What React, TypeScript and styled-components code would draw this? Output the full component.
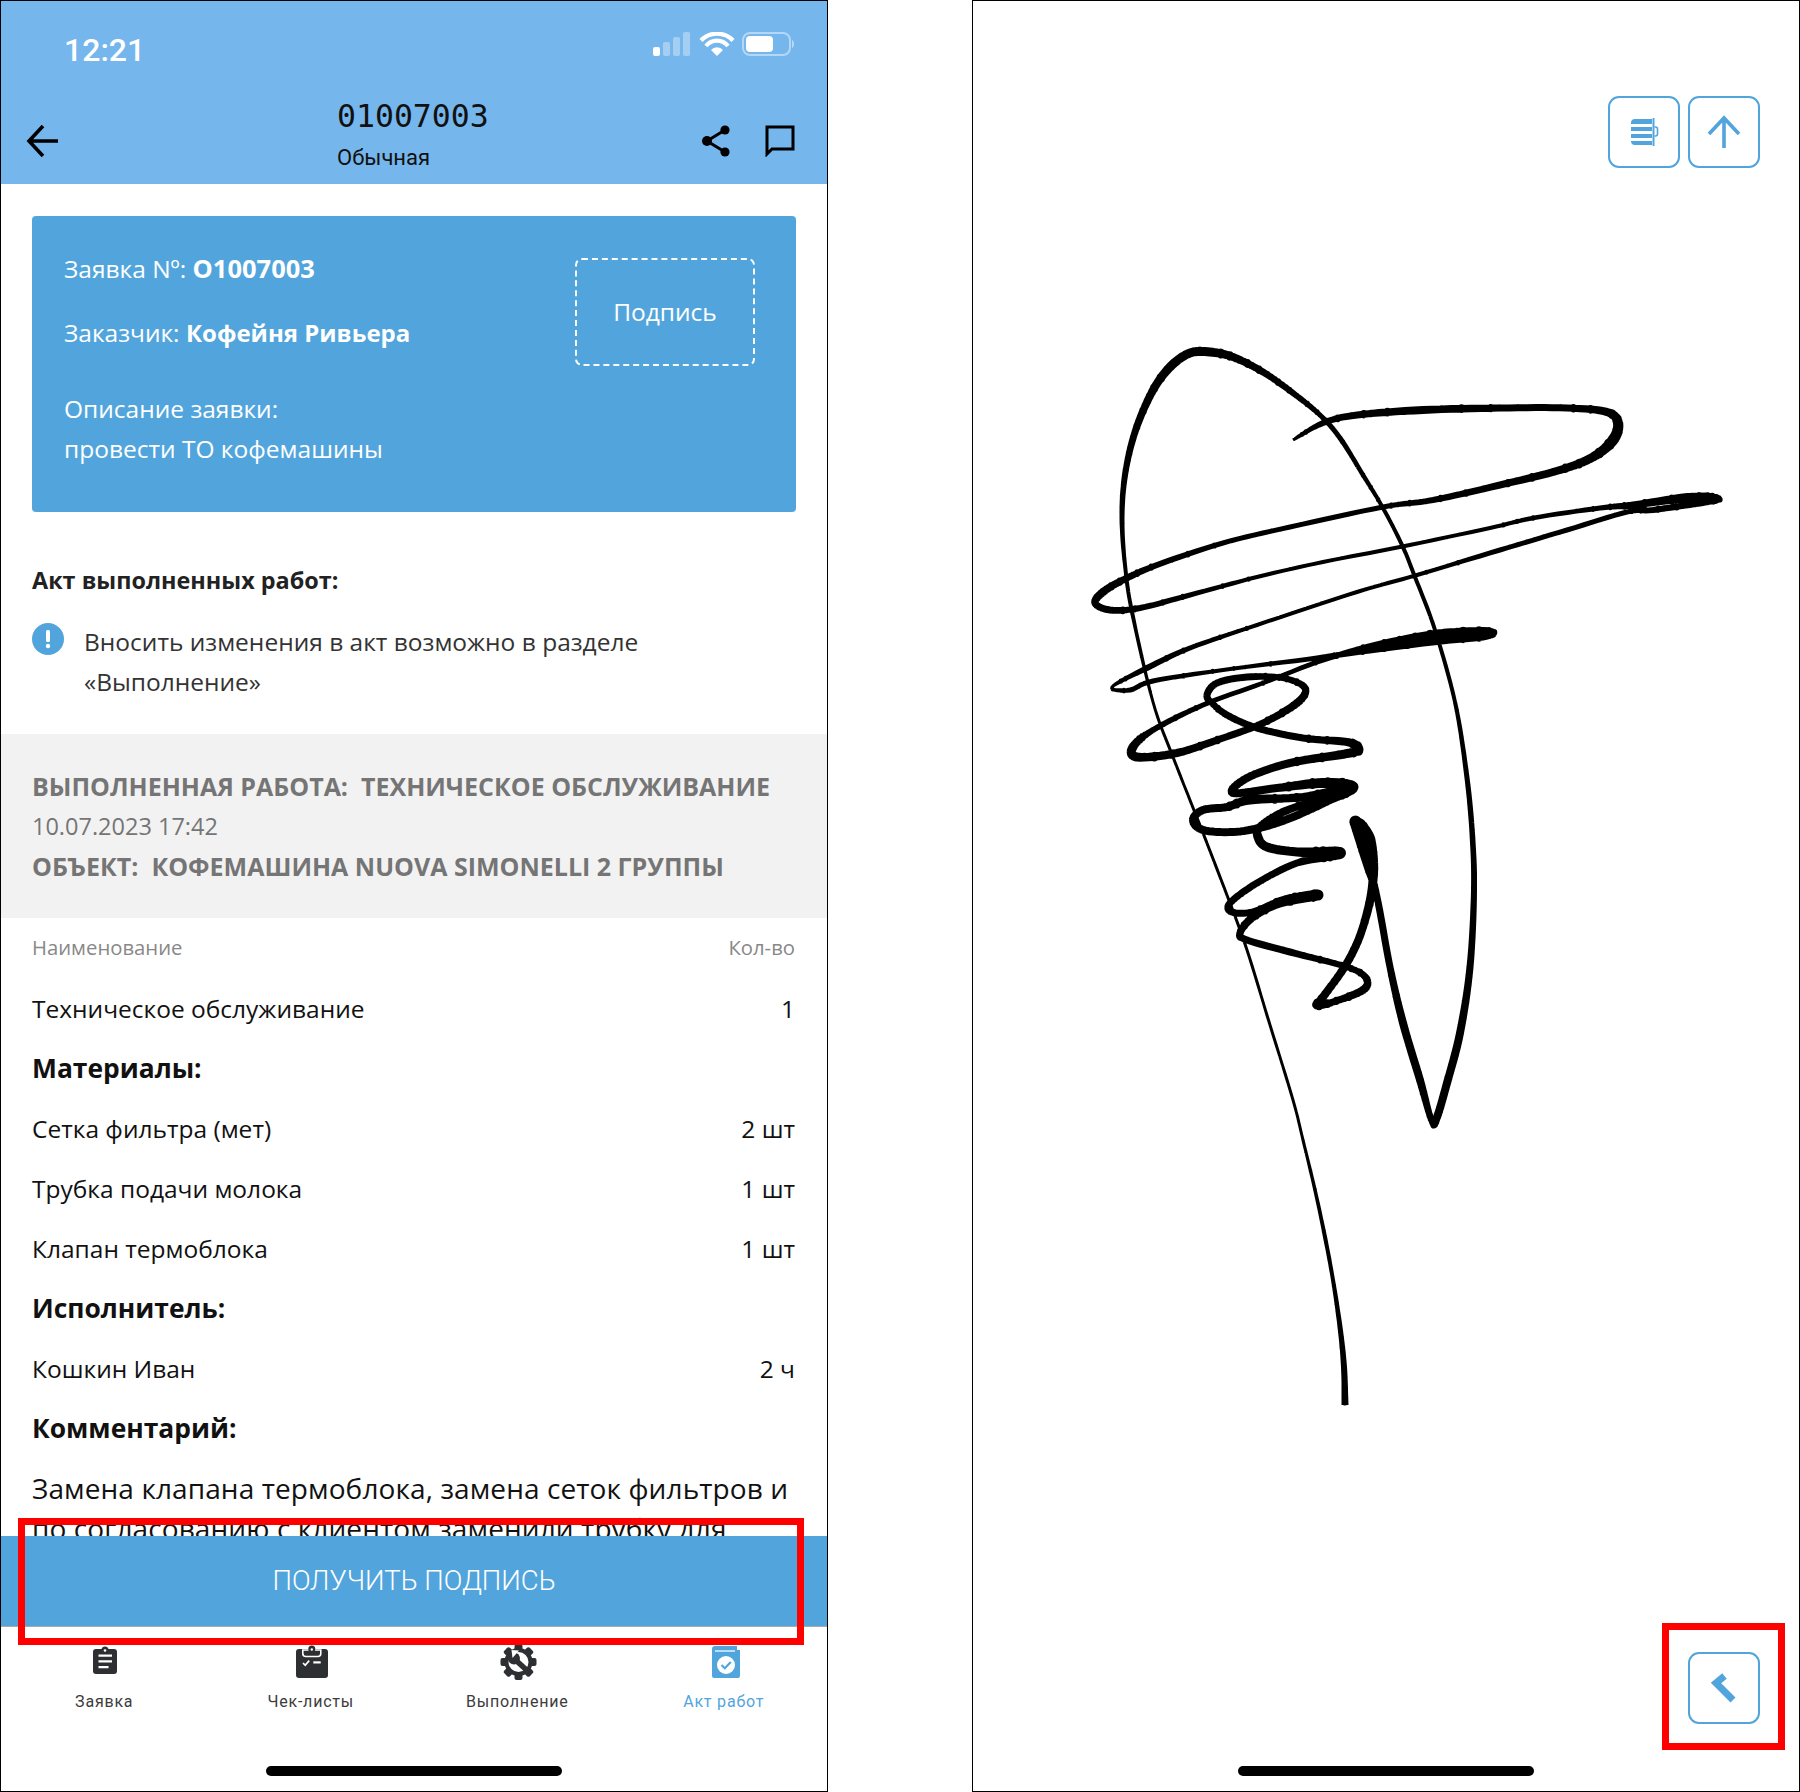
import React from "react";
import styled, { createGlobalStyle } from "styled-components";

const BLUE = "#52a5dc";
const DARK = "#2e2f33";
const BODY = `"Open Sans", "Liberation Sans", sans-serif`;
const UI = `Roboto, "Liberation Sans", sans-serif`;

const Global = createGlobalStyle`
  html, body { margin: 0; padding: 0; background: #fff; }
  * { box-sizing: border-box; }
`;

const Page = styled.div`
  width: 1800px; height: 1792px; display: flex; justify-content: space-between; background: #fff; font-family: ${BODY};
`;
const Phone = styled.section`
  position: relative; width: 828px; height: 1792px; border: 1px solid #000; display: flex; flex-direction: column; background: #fff; overflow: hidden;
`;
const Top = styled.header`
  height: 183px; flex: none; background: #75b6ec; display: flex; flex-direction: column;
`;
const StatusBar = styled.div`
  height: 86px; padding: 31px 32px 0 63px; display: flex; justify-content: space-between; align-items: flex-start;
`;
const Clock = styled.span`
  color: #fff; font: 500 32px/36px ${UI};
`;
const NavBar = styled.div`
  flex: 1; display: flex; padding: 0 32px 0 25px; justify-content: space-between; align-items: flex-start;
`;
const NavBack = styled.div`
  width: 311px; padding-top: 37px; flex: none;
`;
const TitleBox = styled.div`
  flex: 1; padding-top: 11px; display: flex; flex-direction: column;
`;
const Title = styled.div`
  font: 400 31.500px/36px "DejaVu Sans Mono", monospace; color: #111;
`;
const Subtitle = styled.div`
  margin-top: 11px; font: 400 22px/26px ${UI}; color: #111;
`;
const NavActions = styled.div`
  display: flex; gap: 34px; padding-top: 38px;
`;
const Content = styled.div`
  flex: 1; min-height: 0; overflow: hidden; padding-top: 32px;
`;
const Card = styled.div`
  margin: 0 31px; height: 296px; border-radius: 4px; background: ${BLUE}; color: #fff; padding: 32px 41px 0 32px; display: flex; justify-content: space-between;
`;
const CardInfo = styled.div`
  font-size: 24.500px; line-height: 40px;
`;
const CardLine = styled.div<{ $gap?: number }>`
  margin-bottom: ${p => p.$gap ?? 0}px;
  b { font-weight: 700; font-size: 24px; }
`;
const CardNumber = styled.b`
  && { font-size: 25.500px; }
`;
const SignBox = styled.div`
  width: 180px; height: 108px; margin-top: 10px; border: 2px dashed #fff; border-radius: 7px; display: flex; align-items: center; justify-content: center; font-size: 24.500px; padding-bottom: 2px;
`;
const Section = styled.h2`
  margin: 48px 0 0 31px; font: 700 23.400px/40px ${BODY}; color: #222;
`;
const Notice = styled.div`
  margin: 22px 31px 0 31px; display: flex; align-items: flex-start; gap: 20px; font-size: 24.500px; line-height: 40px; color: #333;
`;
const NoticeIcon = styled.svg`
  flex: none; width: 32px; height: 32px; margin-top: 1px;
`;
const Summary = styled.div`
  margin-top: 32px; height: 184px; background: #f2f2f2; padding: 32px 24px 0 31px; color: #757575; font-size: 25px; line-height: 40px;
  b { font-weight: 700; }
`;
const SummaryDate = styled.div`
  font-size: 23.500px;
`;
const THead = styled.div`
  display: flex; justify-content: space-between; margin: 9px 32px 0 31px; height: 40px; align-items: center; font-size: 20.300px; color: #888;
`;
const Row = styled.div<{ $bold?: boolean }>`
  display: flex; justify-content: space-between; align-items: center; height: 60px; margin: 0 32px 0 31px;
  font-size: ${p => (p.$bold ? 26.4 : 24.5)}px; font-weight: ${p => (p.$bold ? 700 : 400)}; color: #111;
`;
const Table = styled.div`
  padding-top: 11px;
`;
const Comment = styled.div`
  margin: 0 31px; font-size: 28px; line-height: 40px; padding-top: 10px; color: #111; letter-spacing: .1px;
`;
const GetSign = styled.div`
  flex: none; height: 91px; border-bottom: 1px solid #aaa; background: ${BLUE}; color: #fff; display: flex; align-items: center; justify-content: center; font: 300 27.500px/1 ${UI};
`;
const Tabs = styled.nav`
  flex: none; height: 164px; display: grid; grid-template-columns: repeat(4, 1fr); align-content: start; padding-top: 17px;
`;
const Tab = styled.div<{ $active?: boolean }>`
  display: flex; flex-direction: column; align-items: center; height: 68px; justify-content: space-between;
  color: ${p => (p.$active ? BLUE : "#3c3c3c")}; font: 400 16px/20px ${UI}; letter-spacing: .8px;
`;
const TabIcon = styled.svg`
  width: 40px; height: 38px;
`;
const HomeBar = styled.div`
  position: absolute; left: 50%; bottom: 15px; width: 296px; height: 10px; border-radius: 5px; background: #000; transform: translateX(-50%);
`;
const Marker = styled.div<{ $l: number; $t: number; $w: number; $h: number }>`
  position: absolute; left: ${p => p.$l}px; top: ${p => p.$t}px; width: ${p => p.$w}px; height: ${p => p.$h}px; border: 7px solid #f00; z-index: 5;
`;
const Canvas = styled.svg`
  position: absolute; inset: 0; width: 100%; height: 100%;
`;
const CanvasBody = styled.div`
  position: relative; flex: 1; display: flex; flex-direction: column; justify-content: space-between; padding: 95px 39px 67px 0; align-items: flex-end;
`;
const Tools = styled.div`
  position: relative; display: flex; gap: 8px;
`;
const ToolButton = styled.div`
  position: relative; width: 72px; height: 72px; border: 2px solid ${BLUE}; border-radius: 11px; display: flex; align-items: center; justify-content: center; background: #fff;
`;

// centre line of the signature: x, y, stroke width
const P: [number, number, number][] = [
  [1345,1405,7],[1344,1367,6],[1340,1327,5],[1333,1280,4],[1325,1237,4],[1315,1190,3.5],[1303,1140,3],[1293,1100,3],[1270,1025,3],[1247,950,3],[1230,903,3],[1203,833,3],[1173,757,3],[1153,702,3],[1132,612,4],[1125,565,4],[1122,518,5],[1125,475,6],[1135,432,7],[1152,392,8],[1170,367,9],[1190,353,9],[1210,352,9],[1233,357,8],[1263,372,7],[1293,393,6],[1320,415,5],[1340,438,5],[1363,475,4.5],[1383,508,4],[1402,545,4],[1415,577,4],[1435,630,4],[1455,702,4],[1466,770,5],[1472,830,5.5],[1474,890,6],[1470,967,7],[1460,1033,8],[1447,1083,8],[1437,1117,8],[1432,1122,6],[1420,1080,8],[1403,1023,8],[1390,967,7],[1377,897,7],[1367,863,9],[1358,830,12],[1356,822,12],[1368,840,15],[1373,880,9],[1363,927,8],[1347,963,8],[1323,997,8],[1317,1005,9],[1333,1002,7],[1363,990,8],[1366,978,7],[1347,967,6],[1290,952,7],[1247,940,7],[1240,933,7],[1253,917,8],[1280,903,9],[1318,895,11],[1285,900,9],[1253,912,7],[1232,912,7],[1230,903,7],[1257,883,7],[1297,863,7],[1340,853,12],[1297,852,9],[1267,847,9],[1258,837,9],[1260,827,8],[1283,812,8],[1317,800,7],[1353,787,10],[1303,797,8],[1250,800,9],[1227,807,8],[1203,810,8],[1193,820,8],[1203,830,8],[1233,832,8],[1263,827,8],[1293,817,8],[1330,800,8],[1353,787,11],[1323,783,10],[1277,788,8],[1233,793,8],[1247,778,8],[1290,763,8],[1350,753,9],[1358,748,10],[1347,742,8],[1303,738,7],[1257,728,7],[1227,715,7],[1212,703,6],[1207,695,7],[1217,683,7],[1247,677,7],[1283,678,6],[1305,688,7],[1297,703,8],[1263,723,7],[1223,738,7],[1177,753,8],[1137,757,9],[1133,747,9],[1153,730,6],[1203,705,5],[1263,683,4.5],[1323,660,5],[1377,645,7],[1437,635,11],[1483,632,10],[1495,633,4],[1483,637,7],[1437,641,8],[1377,649,7],[1317,658,5],[1223,670,4],[1153,681,5],[1130,690,5],[1112,687,3],[1147,668,6],[1190,648,5],[1257,625,4],[1357,592,4],[1417,575,4],[1500,550,5],[1567,530,5],[1627,512,5],[1653,510,6],[1700,503,7],[1720,500,4],[1710,497,8],[1683,498,9],[1633,505,7],[1600,508,5],[1533,518,4.5],[1490,528,4],[1400,547,4],[1323,562,4],[1257,577,4],[1190,595,5],[1140,608,6],[1110,610,7],[1095,603,7],[1103,592,8],[1123,580,7],[1157,565,6],[1223,543,5],[1290,527,5],[1383,507,5],[1433,500,6],[1500,485,7],[1560,470,8],[1593,457,9],[1613,440,11],[1618,423,10],[1607,412,8],[1567,408,7],[1500,408,7],[1423,410,8],[1357,415,7],[1323,423,6],[1293,440,3],
];

function ribbon(points: [number, number, number][]): string {
  const s: [number, number, number][] = [];
  const at = (i: number) => points[Math.max(0, Math.min(points.length - 1, i))];
  for (let i = 0; i < points.length - 1; i++) {
    const [a, b, c, d] = [at(i - 1), at(i), at(i + 1), at(i + 2)];
    for (let k = 0; k < 8; k++) {
      const t = k / 8, t2 = t * t, t3 = t2 * t;
      const f = (j: number) => 0.5 * (2 * b[j] + (c[j] - a[j]) * t + (2 * a[j] - 5 * b[j] + 4 * c[j] - d[j]) * t2 + (3 * b[j] - a[j] - 3 * c[j] + d[j]) * t3);
      s.push([f(0), f(1), b[2] + (c[2] - b[2]) * t]);
    }
  }
  s.push(points[points.length - 1]);
  // a quad per step and a dot per joint, all with one winding, so crossings stay filled
  let out = "";
  for (let i = 0; i < s.length - 1; i++) {
    const [x0, y0, w0] = s[i], [x1, y1, w1] = s[i + 1];
    const dx = x1 - x0, dy = y1 - y0, l = Math.hypot(dx, dy) || 1;
    const nx = -dy / l, ny = dx / l;
    const q = (x: number, y: number, w: number, sg: number) => `${(x + sg * nx * w / 2).toFixed(1)} ${(y + sg * ny * w / 2).toFixed(1)}`;
    out += `M${q(x0, y0, w0, 1)}L${q(x1, y1, w1, 1)}L${q(x1, y1, w1, -1)}L${q(x0, y0, w0, -1)}Z`;
    if (i > 0) {
      const r = w0 / 2;
      out += `M${(x0 - r).toFixed(1)} ${y0.toFixed(1)}a${r.toFixed(1)} ${r.toFixed(1)} 0 1 0 ${(2 * r).toFixed(1)} 0a${r.toFixed(1)} ${r.toFixed(1)} 0 1 0 ${(-2 * r).toFixed(1)} 0Z`;
    }
  }
  return out;
}

const Signature = () => (
  <Canvas viewBox="973 1 826 1790">
    <path d={ribbon(P)} fill="#000" fillRule="nonzero" />
  </Canvas>
);

const StatusIcons = () => (
  <svg width="142" height="24" viewBox="0 0 142 24">
    <rect x="0" y="15" width="7" height="9" rx="2" fill="#fff" />
    <rect x="10" y="10" width="7" height="14" rx="2" fill="#fff" opacity=".35" />
    <rect x="20" y="5" width="7" height="19" rx="2" fill="#fff" opacity=".35" />
    <rect x="30" y="0" width="7" height="24" rx="2" fill="#fff" opacity=".35" />
    <path d="M48 8.500a22 22 0 0 1 32 0M53 14a14 14 0 0 1 22 0" fill="none" stroke="#fff" strokeWidth="4.200" />
    <path d="M58 18a8 8 0 0 1 12 0l-6 6z" fill="#fff" />
    <rect x="90" y="1" width="47" height="22" rx="7" fill="none" stroke="#fff" strokeOpacity=".45" strokeWidth="2" />
    <rect x="93" y="4" width="27" height="16" rx="4" fill="#fff" />
    <path d="M139 8c2.500 .5 2.500 7 0 8z" fill="#fff" opacity=".5" />
  </svg>
);

const Tab1 = () => (
  <TabIcon viewBox="0 0 40 38">
    <g transform="translate(9 3)">
      <rect x="0" y="2" width="24" height="25" rx="3" fill={DARK} />
      <circle cx="12" cy="3" r="3.500" fill={DARK} />
      <circle cx="12" cy="3.500" r="1.300" fill="#fff" />
      <path d="M5.500 7.500H19v2.200H5.500zM5.500 13.300H19v2.200H5.500zM5.500 19H15.500v2.200H5.500z" fill="#fff" />
    </g>
  </TabIcon>
);
const Tab2 = () => (
  <TabIcon viewBox="0 0 40 38">
    <g transform="translate(5 2)">
      <rect x="0" y="3" width="32" height="29" rx="3" fill={DARK} />
      <path d="M6.800 4h18v3.500a3 3 0 0 1-3 3h-12a3 3 0 0 1-3-3z" fill={DARK} stroke="#fff" strokeWidth="1.600" />
      <circle cx="15.800" cy="3" r="3.500" fill={DARK} />
      <circle cx="15.800" cy="3.500" r="1.200" fill="#fff" />
      <rect x="6.800" y="1" width="6" height="2" fill="#fff" opacity="0" />
      <path d="M7 17l2.200 2.200 4-4.600" fill="none" stroke="#fff" strokeWidth="1.700" />
      <rect x="17.300" y="15.300" width="7.400" height="2.200" fill="#fff" />
    </g>
  </TabIcon>
);
const Gear = () => (
  <TabIcon viewBox="0 0 40 38">
    <g transform="translate(3.500 0)">
      <g fill={DARK}>
        {[0, 45, 90, 135].map(a => (
          <rect key={a} x="14" y="0" width="8" height="36" rx="2" transform={`rotate(${a} 18 18)`} />
        ))}
      </g>
      <circle cx="18" cy="18" r="14" fill={DARK} />
      <circle cx="18" cy="18" r="10" fill="#fff" />
      <path d="M14 15L26 26" stroke={DARK} strokeWidth="5.500" />
      <circle cx="13.500" cy="14.500" r="6" fill={DARK} />
      <path d="M12 14L18.500 6.500 11 6z" fill="#fff" />
    </g>
  </TabIcon>
);
const Act = () => (
  <TabIcon viewBox="0 0 40 38">
    <g transform="translate(8 2)">
      <path d="M0 3a3 3 0 0 1 3-3h22v4h3v26a2 2 0 0 1-2 2H2a2 2 0 0 1-2-2z" fill={BLUE} />
      <path d="M3 5h20" stroke="#fff" strokeOpacity=".8" strokeWidth="1.600" />
      <circle cx="14" cy="19" r="9" fill="#fff" />
      <path d="M9.500 19l3.300 3.300 6-6.300" fill="none" stroke={BLUE} strokeWidth="2.200" />
    </g>
  </TabIcon>
);

export default function App() {
  return (
    <Page>
      <Global />
      <Phone>
        <Top>
          <StatusBar>
            <Clock>12:21</Clock>
            <StatusIcons />
          </StatusBar>
          <NavBar>
            <NavBack>
              <svg width="34" height="34" viewBox="0 0 34 34">
                <path d="M32 17H3M17 2L3 17l14 15" fill="none" stroke="#000" strokeWidth="3.600" />
              </svg>
            </NavBack>
            <TitleBox>
              <Title>01007003</Title>
              <Subtitle>Обычная</Subtitle>
            </TitleBox>
            <NavActions>
              <svg width="30" height="32" viewBox="0 0 30 32">
                <path d="M24 5L6 16l18 11" fill="none" stroke="#000" strokeWidth="3" />
                <circle cx="24" cy="5" r="4.600" /><circle cx="6" cy="16" r="5" /><circle cx="24" cy="27" r="4.600" />
              </svg>
              <svg width="30" height="32" viewBox="0 0 30 32">
                <path d="M2 2h26v22H7l-5 5z" fill="none" stroke="#000" strokeWidth="3" />
              </svg>
            </NavActions>
          </NavBar>
        </Top>
        <Content>
          <Card>
            <CardInfo>
              <CardLine $gap={24}>Заявка Nº: <CardNumber>O1007003</CardNumber></CardLine>
              <CardLine $gap={36}>Заказчик: <b>Кофейня Ривьера</b></CardLine>
              <CardLine>Описание заявки:</CardLine>
              <CardLine>провести ТО кофемашины</CardLine>
            </CardInfo>
            <SignBox>Подпись</SignBox>
          </Card>
          <Section>Акт выполненных работ:</Section>
          <Notice>
            <NoticeIcon viewBox="0 0 32 32">
              <circle cx="16" cy="16" r="16" fill={BLUE} />
              <rect x="14" y="7" width="4" height="12" rx="1.500" fill="#fff" />
              <circle cx="16" cy="23" r="2.200" fill="#fff" />
            </NoticeIcon>
            <div>Вносить изменения в акт возможно в разделе<br />«Выполнение»</div>
          </Notice>
          <Summary>
            <div><b>ВЫПОЛНЕННАЯ РАБОТА:&nbsp; ТЕХНИЧЕСКОЕ ОБСЛУЖИВАНИЕ</b></div>
            <SummaryDate>10.07.2023 17:42</SummaryDate>
            <div><b>ОБЪЕКТ:&nbsp; КОФЕМАШИНА NUOVA SIMONELLI 2 ГРУППЫ</b></div>
          </Summary>
          <THead><span>Наименование</span><span>Кол-во</span></THead>
          <Table>
            <Row><span>Техническое обслуживание</span><span>1</span></Row>
            <Row $bold><span>Материалы:</span></Row>
            <Row><span>Сетка фильтра (мет)</span><span>2 шт</span></Row>
            <Row><span>Трубка подачи молока</span><span>1 шт</span></Row>
            <Row><span>Клапан термоблока</span><span>1 шт</span></Row>
            <Row $bold><span>Исполнитель:</span></Row>
            <Row><span>Кошкин Иван</span><span>2 ч</span></Row>
            <Row $bold><span>Комментарий:</span></Row>
          </Table>
          <Comment>Замена клапана термоблока, замена сеток фильтров и по согласованию с клиентом заменили трубку для подачи молока</Comment>
        </Content>
        <GetSign>ПОЛУЧИТЬ ПОДПИСЬ</GetSign>
        <Tabs>
          <Tab><Tab1 /><span>Заявка</span></Tab>
          <Tab><Tab2 /><span>Чек-листы</span></Tab>
          <Tab><Gear /><span>Выполнение</span></Tab>
          <Tab $active><Act /><span>Акт работ</span></Tab>
        </Tabs>
        <HomeBar />
        <Marker $l={17} $t={1517} $w={786} $h={127} />
      </Phone>
      <Phone>
        <CanvasBody>
          <Signature />
          <Tools>
            <ToolButton>
              <svg width="30" height="30" viewBox="0 0 30 30">
                <path d="M6 2h17v5H2V6a4 4 0 0 1 4-4zM2 10h21v4H2zM2 17h21v4H2zM2 24h21v4H6a4 4 0 0 1-4-4z" fill={BLUE} />
                <rect x="23.500" y="1" width="2" height="28" fill={BLUE} />
                <path d="M25.500 10h1a2 2 0 0 1 2 2v5a2 2 0 0 1-2 2h-1" fill="none" stroke={BLUE} strokeWidth="1.600" />
              </svg>
            </ToolButton>
            <ToolButton>
              <svg width="34" height="34" viewBox="0 0 34 34">
                <path d="M17 33V4M2 19L17 3l15 16" fill="none" stroke={BLUE} strokeWidth="3.600" />
              </svg>
            </ToolButton>
          </Tools>
          <ToolButton>
            <svg width="68" height="68" viewBox="0 0 68 68">
              <path d="M34.500 22L26 29l17 17" fill="none" stroke={BLUE} strokeWidth="7" />
            </svg>
          </ToolButton>
        </CanvasBody>
        <HomeBar />
        <Marker $l={689} $t={1622} $w={123} $h={127} />
      </Phone>
    </Page>
  );
}
